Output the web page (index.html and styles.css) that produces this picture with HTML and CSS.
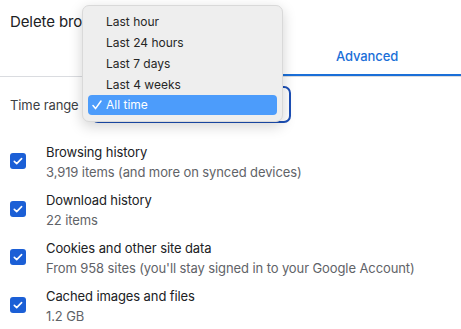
FILE: index.html
```html
<!DOCTYPE html>
<html lang="en">
<head>
    <meta charset="UTF-8">
    <title>Delete browsing data</title>
    <link rel="stylesheet" href="styles.css">
</head>
<body>
    <div class="dialog">
        <div class="dialog__title">Delete browsing data</div>

        <div class="tabs">
            <div class="tab"></div>
            <div class="tab tab--active">Advanced</div>
        </div>

        <div class="time-range">
            <span class="time-range__label">Time range</span>
            <div class="select"></div>
        </div>

        <div class="options">
            <div class="option">
                <span class="checkbox"></span>
                <div class="option__text">
                    <div class="option__title">Browsing history</div>
                    <div class="option__sub">3,919 items (and more on synced devices)</div>
                </div>
            </div>
            <div class="option">
                <span class="checkbox"></span>
                <div class="option__text">
                    <div class="option__title">Download history</div>
                    <div class="option__sub">22 items</div>
                </div>
            </div>
            <div class="option">
                <span class="checkbox"></span>
                <div class="option__text">
                    <div class="option__title">Cookies and other site data</div>
                    <div class="option__sub">From 958 sites (you'll stay signed in to your Google Account)</div>
                </div>
            </div>
            <div class="option">
                <span class="checkbox"></span>
                <div class="option__text">
                    <div class="option__title">Cached images and files</div>
                    <div class="option__sub">1.2 GB</div>
                </div>
            </div>
        </div>
    </div>

    <!-- open select popup -->
    <ul class="menu">
        <li class="menu__item">Last hour</li>
        <li class="menu__item">Last 24 hours</li>
        <li class="menu__item">Last 7 days</li>
        <li class="menu__item">Last 4 weeks</li>
        <li class="menu__item menu__item--selected">All time</li>
    </ul>
</body>
</html>
```

FILE: styles.css
```css
* {
    margin: 0;
    padding: 0;
    box-sizing: border-box;
}

body {
    width: 461px;
    height: 329px;
    overflow: hidden;
    background: #fff;
    font-family: "Inter", "Noto Sans", sans-serif;
    font-size: 13px;
    letter-spacing: -0.1px;
    color: #202124;
    position: relative;
}

.dialog__title {
    font-size: 15px;
    line-height: 20px;
    padding: 12px 10px 0;
    color: #202124;
}

/* tabs */
.tabs {
    display: flex;
    height: 45px;
    border-bottom: 1px solid #dadce0;
}

.tab {
    flex: 0 0 273px;
    display: flex;
    align-items: center;
    justify-content: center;
    font-weight: 500;
    color: #5f6368;
    padding-top: 4px;
}

.tab--active {
    flex: 1;
    color: #1a6fd8;
    border-bottom: 2px solid #1a6fd8;
    padding-top: 5px;
}

/* time range */
.time-range {
    display: flex;
    align-items: center;
    gap: 12px;
    padding: 9px 10px 0;
}

.time-range__label {
    color: #3c4043;
}

.select {
    width: 200px;
    height: 37px;
    border: 2px solid #1c4fb6;
    border-radius: 7px;
}

/* checkbox list */
.options {
    display: flex;
    flex-direction: column;
    gap: 8px;
    padding: 19px 10px 0;
}

.option {
    display: flex;
    align-items: center;
    gap: 20px;
}

.checkbox {
    width: 16px;
    height: 16px;
    border-radius: 3px;
    background: #1b5fd6 url("data:image/svg+xml,%3Csvg xmlns='http://www.w3.org/2000/svg' viewBox='0 0 16 16'%3E%3Cpath d='M4.3 8.3l2.4 2.3 4.9-5' fill='none' stroke='white' stroke-width='1.6' stroke-linecap='round' stroke-linejoin='round'/%3E%3C/svg%3E") center / 16px 16px no-repeat;
    margin-top: -3px;
}

.option__title,
.option__sub {
    line-height: 20px;
}

.option__sub {
    color: #5f6368;
}

/* popup menu */
.menu {
    position: absolute;
    left: 82px;
    top: 5px;
    width: 201px;
    height: 117px;
    list-style: none;
    padding: 5px;
    background: #eeeeee;
    border: 1px solid #d9d9d9;
    border-radius: 7px;
    box-shadow: 0 4px 14px rgba(0, 0, 0, 0.18);
    font-size: 12px;
    letter-spacing: 0;
}

.menu__item {
    height: 21px;
    line-height: 21px;
    padding-left: 18px;
    border-radius: 4px;
    color: #262626;
    position: relative;
}

.menu__item--selected {
    background: #4c9cfb;
    color: #fff;
    height: 20px;
    line-height: 20px;
}

.menu__item--selected::before {
    content: "";
    position: absolute;
    left: 4px;
    top: 5px;
    width: 10px;
    height: 10px;
    background: url("data:image/svg+xml,%3Csvg xmlns='http://www.w3.org/2000/svg' viewBox='0 0 10 10'%3E%3Cpath d='M1 5.6l2.5 3L9 1' fill='none' stroke='white' stroke-width='1.5' stroke-linecap='round' stroke-linejoin='round'/%3E%3C/svg%3E") center / 10px 10px no-repeat;
}
```
